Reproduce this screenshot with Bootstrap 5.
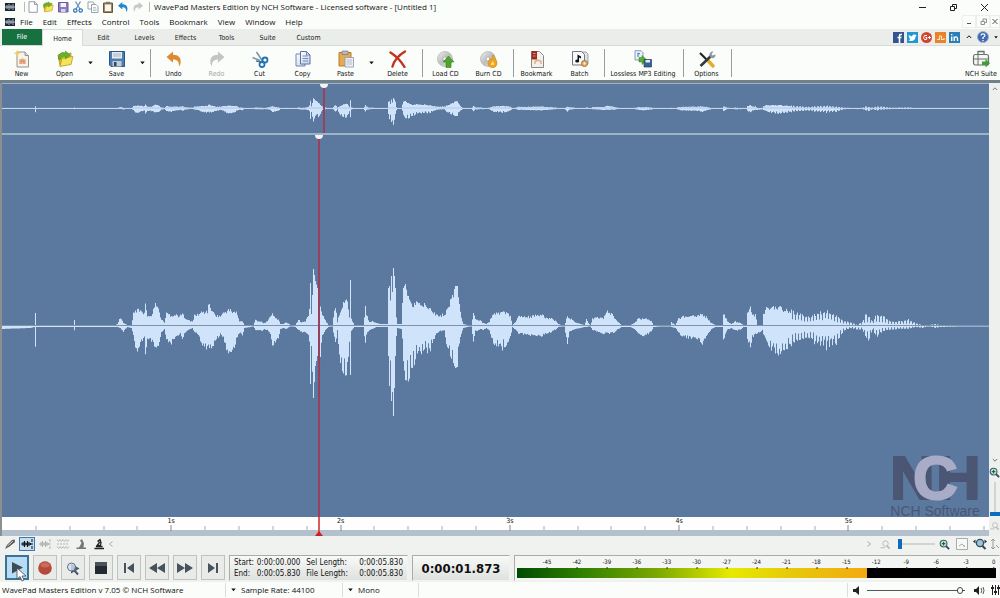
<!DOCTYPE html>
<html lang="en">
<head>
<meta charset="utf-8">
<meta name="viewport" content="width=device-width, initial-scale=1">
<title>WavePad Masters Edition</title>
<link href="https://cdn.jsdelivr.net/npm/bootstrap@5.3.0/dist/css/bootstrap.min.css" rel="stylesheet">
<style>
  :root { --ui: "Open Sans", "Noto Sans", sans-serif; --tahoma: "DejaVu Sans Condensed", "DejaVu Sans", sans-serif; }
  body { font: 8px/12px var(--ui); color: #111; background: #fbfdfb; overflow: hidden; }
  svg { display: block; flex: none; }
  a, a:hover { color: inherit; text-decoration: none; }
  .plain { border: 0; background: none; padding: 0; color: inherit; font: inherit; display: flex; align-items: center; justify-content: center; }
  .ic { width: 12px; height: 12px; }
  .rule { height: 10px; border-left: 1px solid #bbb; }
  .title-row { height: 14px; padding-left: 4px; }
  .title-row .plain { width: 15px; }
  .title-row .win { width: 31px; }
  .menu-row { height: 15px; padding-left: 4px; }
  .menus { gap: 10px; }
  .child .plain { width: 14px; height: 13px; border: 1px solid #eceeec; color: #555; }
  .tab-row { height: 17px; background: #ebedea; padding-left: 2px; font: 7px/15px var(--tahoma); border-bottom: 1px solid #d9dbd8; }
  .tab-row .tab { width: 41px; height: 16px; text-align: center; color: #222; padding: 0; line-height: 18px; }
  .tab-row .file-tab { background: #17703f; color: #fff; width: 40px; }
  .tab-row .tab.active { background: #fbfdfb; border: 1px solid #d9dbd8; border-bottom: 0; height: 17px; margin-bottom: -1px; }
  .social { gap: 3px; }
  .ribbon { height: 37px; border-bottom: 3px solid #71818c; font: 7px/9px var(--tahoma); }
  .tool { width: 43px; flex-direction: column; padding-top: 4px; justify-content: flex-start; white-space: nowrap; }
  .tool svg { width: 18px; height: 18px; margin-bottom: 2px; }
  .tool.wide { width: 74px; }
  .drop { width: 9px; }
  .sep { width: 1px; background: #9b9d9b; margin: 3px 1px 3px 3px; }
  .side { width: 11px; background: #edf0ed; color: #777; padding-top: 3px; }
  .wave-col { border-left: 2px solid #8b8f8f; min-width: 0; }
  .overview { height: 52px; background: #5b799e; border-bottom: 2px solid #9db3c6; border-top: 1px solid #9db3c6; }
  .mainwave { background: #5b799e; min-height: 0; }
  .fill { width: 100%; height: 100%; }
  .head { position: absolute; top: 0; bottom: 0; width: 2px; margin-left: -1px; background: #98405c; }
  .head::before { content: ""; position: absolute; left: -3px; top: 0; width: 8px; height: 4px; background: #f2f4f2; border-radius: 0 0 4px 4px; }
  .ruler { height: 19px; background: #fdfefd; border-bottom: 6px solid #b4c0ce; font: 7px/8px var(--tahoma); }
  .ruler i, .ruler span { position: absolute; transform: translateX(-50%); top: 0; }
  .ruler i { width: 1px; height: 4px; top: 9px; background: #aab; }
  .ruler i.sec { height: 6px; top: 8px; background: #889; }
  .ruler .pos { width: 2px; height: 19px; margin-left: -1px; background: #dc5a5c; transform: none; }
  .pos::after { content: ""; position: absolute; bottom: 0; left: -3px; border: 4px solid transparent; border-top: 0; border-bottom: 5px solid #d0201c; }
  .brand { position: absolute; right: 9px; bottom: -2px; width: 90px; color: #4a5674; font-family: "Liberation Sans", sans-serif; text-align: center; }
  .brand b { display: flex; font-size: 62px; line-height: 48px; height: 48px; -webkit-text-stroke: 2px currentColor; }
  .brand b span { width: 45px; flex: none; }
  .brand .c { margin: 0 -22px; color: #a8acc6; position: relative; z-index: 1; }
  .brand small { font-size: 14px; line-height: 16px; white-space: nowrap; display: block; margin-top: 1px; }
  .mode-row { height: 16px; background: #f0f2ef; padding: 0 0 0 2px; }
  .mode-row .plain { width: 18px; height: 14px; }
  .mode-row .on { background: #c3def2; border: 1px solid #3b78ad; width: 16px; margin: 0 1px; }
  .transport { background: #eff1ee; padding: 3px 0 2px 5px; height: 30px; }
  .key { width: 24px; height: 25px; border: 1px solid #bfc2bf; background: #e9ebe8; }
  .key.on { background: #b7dcf4; border: 2px solid #3c7395; }
  .pointer { position: absolute; left: 9px; top: 10px; }
  .panel { border: 1px solid; border-color: #a9aca9 #f2f2f2 #f2f2f2 #a9aca9; background: linear-gradient(#f8faf8, #dfe1df); height: 26px; }
  .times { width: 179px; padding: 1px 4px; font: 8px/11px var(--tahoma); }
  .times td { padding: 0; white-space: nowrap; }
  .clock { width: 98px; font: bold 13px/25px var(--tahoma); text-align: center; }
  .meter { padding: 1px 3px 0 2px; font: 6px/8px var(--tahoma); background: #f4f6f3; min-width: 0; }
  .scale { height: 11px; }
  .scale span { position: absolute; transform: translateX(-50%); top: 1px; }
  .scale span::after { content: ""; position: absolute; left: 50%; top: 9px; width: 1px; height: 2px; background: #333; }
  .level { height: 10px; background: #000; }
  .level div { height: 100%; background: linear-gradient(90deg, #004c00, #2f7f00 18%, #7ba800 40%, #e6ea00 61%, #e6c90a 78%, #f3aa10); }
  .status { height: 16px; background: #fbfdfb; padding-left: 2px; }
  .status .about { width: 223px; }
  .status .cell { border-left: 1px solid #dcdedc; padding-left: 5px; height: 14px; gap: 5px; }
  .rate { width: 117px; }
  .mode { width: 76px; }
  input[type=range] { appearance: none; height: 10px; background: linear-gradient(#555, #555) center/100% 1px no-repeat; margin: 0; }
  input[type=range]::-webkit-slider-thumb { appearance: none; width: 6px; height: 7px; border: 1px solid #444; border-radius: 3px; background: #fff; }
  .volume { width: 98px; }
  input.blue { width: 37px; background: linear-gradient(#d2d4d2, #d2d4d2) center/100% 2px no-repeat; }
  input.blue::-webkit-slider-thumb { width: 4px; height: 10px; border: 0; border-radius: 0; background: #0b6dc0; }
  input.vert { writing-mode: vertical-lr; direction: rtl; width: 10px; height: 34px; background: linear-gradient(#d2d4d2, #d2d4d2) center/2px 100% no-repeat; }
  input.vert::-webkit-slider-thumb { width: 10px; height: 4px; }
</style>
</head>
<body class="d-flex flex-column vh-100">

<svg width="0" height="0" class="position-absolute">
  <defs>
    <linearGradient id="gPage" x2="1" y2="1"><stop stop-color="#fff"/><stop offset="1" stop-color="#c3d0e4"/></linearGradient>
    <linearGradient id="gDisc" x2="1" y2="1"><stop stop-color="#eee"/><stop offset=".5" stop-color="#bcc0bc"/><stop offset="1" stop-color="#e9ebe8"/></linearGradient>
    <symbol id="app" viewBox="0 0 12 12"><path d="M1 2h10v8H1z" fill="#1d2630"/><path d="M1 6h10M3 4v4M5 3v6M7 4v4M9 3v6" stroke="#cfe0f0" stroke-width=".8"/></symbol>
    <symbol id="page" viewBox="0 0 12 12"><path d="M2 .7h5.500L10.300 3.500V11.300H2z" fill="#fff" stroke="#7c858f" stroke-width=".8"/><path d="M7.500.7v2.800h2.800" fill="none" stroke="#7c858f" stroke-width=".8"/></symbol>
    <symbol id="new" viewBox="0 0 18 18"><path d="M4 2h8l3.500 3.500V17H4z" fill="#f6f3ea" stroke="#96948c"/><path d="M12 2v3.500h3.500" fill="#ddd" stroke="#96948c"/><path d="M6 9h2l1.500-1L11 9h2v5H6z" fill="#eec19b"/><path d="M7 11.500l2.500-2 2.500 2M8 14v-2.500h3V14" fill="none" stroke="#d48e58"/><path d="M4 0l1 2.500L7.500 3 5 4.200 4 7 3 4.200.5 3 3 2.500z" fill="#f4cd4c"/></symbol>
    <symbol id="open" viewBox="0 0 18 18"><path d="M2 5l5-2 1.500 1.500L15 3v11L4 16z" fill="#e4b832" stroke="#b08d20" stroke-width=".7"/><path d="M4 16.500l2-8 11-2-2 8z" fill="#f5e45a" stroke="#b39522" stroke-width=".7"/><path d="M2.500 9c-.5-5 3-7.500 7-6V1l4.500 4-4.500 4V6.500C7 5.500 5 7 4 10z" fill="#62b52c" stroke="#3f8518" stroke-width=".5"/></symbol>
    <symbol id="save" viewBox="0 0 18 18"><path d="M1.500 1.500h15v15H3l-1.500-1.500z" fill="#4c80b5" stroke="#2d547f"/><path d="M4 2h10v6.500H4z" fill="#e8edf2"/><path d="M5 4h8M5 6h8" stroke="#a6b2be"/><path d="M4.500 11h9v5.500h-9z" fill="#c2ccd6"/><path d="M6 12h2.500v4H6z" fill="#34475c"/></symbol>
    <symbol id="save2" viewBox="0 0 12 12"><path d="M1.500 1.500h9.500v9.500h-9.500z" fill="#8b7ac0" stroke="#6a5a9b"/><path d="M3.500 2h5.500v4H3.500z" fill="#f1f1f8"/><path d="M4 8h4.500v3H4z" fill="#d6d3e8"/></symbol>
    <symbol id="cut" viewBox="0 0 18 18"><path d="M5.500 2l6 9M1.500 7.500L9 10.500" stroke="#7d99ae" stroke-width="1.700"/><path d="M5 11l6 1" stroke="#54758e" stroke-width="1.500"/><circle cx="14" cy="10" r="2.500" fill="none" stroke="#2674ad" stroke-width="1.800"/><circle cx="11" cy="14.500" r="2.500" fill="none" stroke="#2674ad" stroke-width="1.800"/></symbol>
    <symbol id="cut2" viewBox="0 0 12 12"><path d="M3.500.5l4.500 7.500M8.500.5L4 8" stroke="#6c93b8" stroke-width="1.300"/><circle cx="3.300" cy="9.500" r="1.700" fill="none" stroke="#2c75b8" stroke-width="1.200"/><circle cx="8.700" cy="9.500" r="1.700" fill="none" stroke="#2c75b8" stroke-width="1.200"/></symbol>
    <symbol id="copy" viewBox="0 0 18 18"><path d="M2 4h6l3 3v9H2z" fill="url(#gPage)" stroke="#6f86b5"/><path d="M6.500 1.500h6l3.500 3.500v9H6.500z" fill="url(#gPage)" stroke="#5873a9"/><path d="M12.500 1.500V5H16M8.500 6h5M8.500 8.500h5.500M8.500 11h5.500" fill="none" stroke="#5873a9" stroke-width=".8"/></symbol>
    <symbol id="copy2" viewBox="0 0 12 12"><path d="M1 1h5l1 1v6H1z" fill="#fff" stroke="#8a98a4" stroke-width=".9"/><path d="M4.500 3.500h4.500l2 2V11.500H4.500z" fill="#fff" stroke="#8a98a4" stroke-width=".9"/><path d="M6 6.500h3M6 8h3.500M6 9.500h3.500" stroke="#9cb0bf" stroke-width=".7"/></symbol>
    <symbol id="paste" viewBox="0 0 18 18"><path d="M2 2.500h12V16H2z" fill="#e6ab50" stroke="#b97c28"/><path d="M5 1h6v3.500H5z" fill="#b9babc" stroke="#77797c" stroke-width=".7"/><path d="M8 7.500h8.500V17H8z" fill="#eceef4" stroke="#8a94ae" stroke-width=".8"/><path d="M9.500 10h5.500M9.500 12h5.500M9.500 14h5.500" stroke="#a9b2c8" stroke-width=".8"/></symbol>
    <symbol id="clip" viewBox="0 0 12 12"><path d="M1.500 2h9v9.500h-9z" fill="#a98457" stroke="#6c5434"/><path d="M3 3.500h6V10H3z" fill="#f6f5f2"/><path d="M4 .8h4v2H4z" fill="#777"/></symbol>
    <symbol id="undo" viewBox="0 0 18 18"><path d="M1.500 7L8 1.500v3.200c5.500 0 8.500 3 7.500 9l-1.500 3c.2-5-1.500-7.200-6-7.200v3.300z" fill="currentColor"/></symbol>
    <symbol id="redo" viewBox="0 0 18 18"><path d="M16.500 7L10 1.500v3.200c-5.500 0-8.500 3-7.500 9l1.500 3c-.2-5 1.500-7.200 6-7.200v3.300z" fill="currentColor"/></symbol>
    <symbol id="del" viewBox="0 0 18 18"><path d="M1.500 2.500C7 6 12 11 15.500 17M16 1.500C10 5 5 11 3.500 16.500" stroke="#c2341f" stroke-width="2.400" fill="none" stroke-linecap="round"/></symbol>
    <symbol id="disc" viewBox="0 0 18 18"><circle cx="8" cy="9" r="7.500" fill="url(#gDisc)" stroke="#aeb2ae" stroke-width=".7"/><circle cx="8" cy="9" r="2" fill="#fff" stroke="#999" stroke-width=".6"/></symbol>
    <symbol id="load" viewBox="0 0 18 18"><use href="#disc"/><path d="M11.500 6l5.500 6h-3v5.500H9V12H6z" fill="#4da52c" stroke="#36801c" stroke-width=".6"/></symbol>
    <symbol id="burn" viewBox="0 0 18 18"><use href="#disc"/><path d="M13 5c1 3 4 4.500 4 8a4.500 4.500 0 0 1-9 .5c0-2 1.500-3 2-5l1.500 1.500C12.500 8.500 12 6.500 13 5z" fill="#f0a422" stroke="#c97c12" stroke-width=".6"/><path d="M12.500 11c1 1.500 2 2 1.500 4h-3c-.5-1.500 1-2 1.500-4z" fill="#fbe37a"/></symbol>
    <symbol id="bookmark" viewBox="0 0 18 18"><path d="M3.500 1.500h8l4 4v12h-12z" fill="#f2efec" stroke="#8c8985"/><path d="M3.500 1h5.500v8.500H3.500z" fill="#9c2c22"/><path d="M5 3.500h2.500M5 6h2.500" stroke="#d98a80"/><path d="M7 14v-2.500l3-1.500 3 1.500V14" stroke="#e2aa80" stroke-width="1.400" fill="none"/></symbol>
    <symbol id="batch" viewBox="0 0 18 18"><path d="M7 2h8l2 2v10H7z" fill="#dfe3ea" stroke="#8a8e98" stroke-width=".8"/><path d="M1.500 1.500h9l3 3V15h-12z" fill="#f7f8fa" stroke="#747882"/><path d="M6.500 11V4.500l3.500 2v2L8 7.500V11z" fill="#111"/><ellipse cx="6.200" cy="11" rx="2" ry="1.600" fill="#111"/><circle cx="13.500" cy="13.500" r="3" fill="#e6b062" stroke="#a8742c"/><circle cx="13.500" cy="13.500" r="1" fill="#fff"/></symbol>
    <symbol id="lossless" viewBox="0 0 18 18"><path d="M1 .7h6l2 2V10H1z" fill="#eaf1f8" stroke="#6f86a0" stroke-width=".8"/><path d="M4 7V3l2 1" stroke="#3b73a8" fill="none"/><path d="M5 7.500h3V5.500l5 4.500-5 4.500V12H5z" fill="#58ad34" stroke="#37821d" stroke-width=".5"/><path d="M10 9.500h7.500V17H10z" fill="#35648f" stroke="#24435f" stroke-width=".7"/><path d="M11.500 10h4.500v2.500h-4.500z" fill="#e4ecf3"/></symbol>
    <symbol id="options" viewBox="0 0 18 18"><path d="M2 3l8 8" stroke="#222" stroke-width="2.200"/><path d="M10 10.500l5 5.500" stroke="#e1ad2c" stroke-width="3.400" stroke-linecap="round"/><path d="M2.500 16L13 6" stroke="#333a40" stroke-width="2.600"/><path d="M12 7c-1.500-3 .5-6 3.500-5.500L13.500 4l1 1.500 3-1c.5 3-2.500 5-5.500 2.500z" fill="#8e959b"/></symbol>
    <symbol id="suite" viewBox="0 0 18 18"><path d="M6 4.500V1.500h6v3" fill="none" stroke="#69706c" stroke-width="1.300"/><rect x="1.500" y="4.500" width="15" height="10.500" rx="2" fill="#f5f7f5" stroke="#69706c" stroke-width="1.200"/><path d="M1.500 9h15M6 5v10" stroke="#69706c"/><path d="M10 11.500h3.500V9l4.500 4.300-4.500 4.300V15H10z" fill="#3f9e3a"/></symbol>
    <symbol id="caret" viewBox="0 0 6 4"><path d="M.3.300h5.400L3 3.500z" fill="#111"/></symbol>
    <symbol id="up" viewBox="0 0 6 6"><path d="M.8 4L3 1.800 5.200 4" fill="none" stroke="currentColor"/></symbol>
    <symbol id="zin" viewBox="0 0 12 12"><path d="M7.500 7.500l3.500 3.500" stroke="#345" stroke-width="2"/><circle cx="5" cy="5" r="3.700" fill="#cfe6ee" stroke="#3f5e70" stroke-width="1.200"/><path d="M3 5h4M5 3v4" stroke="#16701c" stroke-width="1.300"/></symbol>
    <symbol id="zout" viewBox="0 0 12 12"><g fill="none" stroke="#b6bab7"><path d="M7.500 7.500l3 3" stroke-width="1.600"/><circle cx="6" cy="5" r="3"/><path d="M.5 9.500h5"/></g></symbol>
    <symbol id="zall" viewBox="0 0 14 12"><path d="M9 7.500l3.500 3.500" stroke="#345" stroke-width="2"/><circle cx="7" cy="5" r="3.600" fill="#9cc6d8" stroke="#2e5063" stroke-width="1.300"/><path d="M0 3.500L2.500 1.500v4zM14 3.500L11.500 1.500v4z" fill="#234"/></symbol>
    <symbol id="wv" viewBox="0 0 14 12"><path d="M1 6h12M3 4v4M4.500 3v6M6 4.500v3M7.500 3v6M9 4v4M10.500 5v2" stroke="currentColor" stroke-width="1.100" fill="none"/><path d="M12 1v3M12 8v3" stroke="currentColor"/></symbol>
    <symbol id="wv2" viewBox="0 0 14 12"><path d="M1 1.500l1.500 2L4 1.500l1.500 2L7 1.500l1.500 2L10 1.500l1.500 2L13 1.500M1 8.500l1.500 2L4 8.500l1.500 2L7 8.500l1.500 2L10 8.500l1.500 2L13 8.500" stroke="currentColor" stroke-width=".9" fill="none"/><path d="M1 6h12" stroke="currentColor" stroke-dasharray="2 1"/></symbol>
    <symbol id="scrub" viewBox="0 0 12 12"><path d="M1.500 11h9.500v-1.500H8.500l.5-4-2-4.500-2 1.500L6.500 5 4 9.500H1.500z" fill="currentColor"/></symbol>
    <symbol id="scrub2" viewBox="0 0 12 12"><path d="M1.500 10.500h9.500M3 8.500h6.500M7.500 7.500L8 4.500 7 1.500 5 3l1.500 1.500L4 7.500z" stroke="currentColor" stroke-width="1.300" fill="none"/></symbol>
  </defs>
</svg>

<header>
  <div class="title-row d-flex align-items-center">
    <svg class="ic me-1"><use href="#app"/></svg>
    <span class="rule ms-1"></span>
    <button class="plain" aria-label="New file"><svg class="ic"><use href="#page"/></svg></button>
    <button class="plain" aria-label="Open file"><svg class="ic"><use href="#open"/></svg></button>
    <button class="plain" aria-label="Save file"><svg class="ic"><use href="#save2"/></svg></button>
    <button class="plain" aria-label="Cut"><svg class="ic"><use href="#cut2"/></svg></button>
    <button class="plain" aria-label="Copy"><svg class="ic"><use href="#copy2"/></svg></button>
    <button class="plain" aria-label="Paste"><svg class="ic"><use href="#clip"/></svg></button>
    <button class="plain" aria-label="Undo" style="color:#2687cf"><svg class="ic"><use href="#undo"/></svg></button>
    <button class="plain" aria-label="Redo" style="color:#c4c8c6"><svg class="ic"><use href="#redo"/></svg></button>
    <span class="rule ms-1 me-1"></span>
    <span class="text-nowrap">WavePad Masters Edition by NCH Software - Licensed software - [Untitled 1]</span>
    <div class="ms-auto d-flex">
      <button class="plain win" aria-label="Minimize"><svg width="9" height="9"><path d="M1 4.500h7" stroke="#222"/></svg></button>
      <button class="plain win" aria-label="Restore"><svg width="9" height="9"><path d="M1.500 3.500h4v4h-4zM3.500 3V1.500h4v4H6" fill="none" stroke="#222"/></svg></button>
      <button class="plain win" aria-label="Close"><svg width="9" height="9"><path d="M1 1l7 7M8 1L1 8" stroke="#222"/></svg></button>
    </div>
  </div>
  <nav class="menu-row d-flex align-items-center">
    <svg class="ic me-1"><use href="#app"/></svg>
    <div class="menus d-flex">
      <a href="#">File</a><a href="#">Edit</a><a href="#">Effects</a><a href="#">Control</a><a href="#">Tools</a><a href="#">Bookmark</a><a href="#">View</a><a href="#">Window</a><a href="#">Help</a>
    </div>
    <div class="child ms-auto d-flex">
      <button class="plain" aria-label="Minimize document"><svg width="7" height="7"><path d="M1 5.500h4" stroke="#555"/></svg></button>
      <button class="plain" aria-label="Restore document"><svg width="7" height="7"><path d="M1 3.500h3.500v3H1zM3 3V1h3.500v3.500H5" fill="none" stroke="#777" stroke-width=".8"/></svg></button>
      <button class="plain" aria-label="Close document" style="width:10px"><svg width="6" height="7"><path d="M.5 1l5 5M5.500 1l-5 5" stroke="#555"/></svg></button>
    </div>
  </nav>
  <div class="tab-row d-flex align-items-end">
    <button class="plain tab file-tab">File</button>
    <a href="#" class="tab active">Home</a><a href="#" class="tab">Edit</a><a href="#" class="tab">Levels</a><a href="#" class="tab">Effects</a><a href="#" class="tab">Tools</a><a href="#" class="tab">Suite</a><a href="#" class="tab">Custom</a>
    <div class="social ms-auto d-flex align-items-center align-self-center">
      <a href="#" aria-label="Facebook"><svg width="11" height="11"><path d="M0 0h11v11H0z" fill="#34548f"/><path d="M9 2.500H7.500Q6.500 2.500 6.500 4v7M4.500 5.500h4" stroke="#fff" stroke-width="1.600" fill="none"/></svg></a>
      <a href="#" aria-label="Twitter"><svg width="11" height="11"><path d="M0 0h11v11H0z" fill="#2297d6"/><path d="M1.500 3l3.500 1.500Q5.500 2 7.500 2.500L9.500 3 8.500 5Q8 9 4 9L1.500 8.500 3 7.500z" fill="#fff"/></svg></a>
      <a href="#" aria-label="Google Plus"><svg width="11" height="11"><circle cx="5.500" cy="5.500" r="5.500" fill="#cf4532"/><path d="M6 3.500Q3 2.500 2.500 5.500 3 8.500 5.500 7.500L6 5.500H4.500M8.500 4v3M7 5.500h3" stroke="#fff" fill="none"/></svg></a>
      <a href="#" aria-label="StumbleUpon"><svg width="11" height="11"><path d="M0 0h11v11H0z" fill="#e8832a"/><path d="M2 7.500h2.500v-3q1-1.500 2 0v3H9V6" stroke="#fbe0c4" fill="none" stroke-width="1.200"/></svg></a>
      <a href="#" aria-label="LinkedIn"><svg width="11" height="11"><path d="M0 0h11v11H0z" fill="#2a7fb6"/><path d="M2.700 4.500V9M5.200 9V4.500M5.200 6q2.800-2.500 3.300.5V9M2.700 2v1.300" stroke="#fff" stroke-width="1.400" fill="none"/></svg></a>
      <button class="plain" aria-label="Collapse ribbon" style="width:11px"><svg width="6" height="6"><use href="#up"/></svg></button>
      <button class="plain" aria-label="Help"><svg width="12" height="12"><circle cx="6" cy="6" r="5.500" fill="#3f68ae" stroke="#9db2d4"/><path d="M4 4.500Q4.200 2.800 6 2.800t2 1.700Q8 5.500 6 6.500V8M6 9v1.200" stroke="#fff" stroke-width="1.300" fill="none"/></svg></button>
      <button class="plain" aria-label="More help" style="width:8px"><svg width="4" height="3"><use href="#caret"/></svg></button>
    </div>
  </div>
  <div class="ribbon d-flex">
    <button class="plain tool"><svg><use href="#new"/></svg>New</button>
    <button class="plain tool"><svg><use href="#open"/></svg>Open</button>
    <button class="plain drop" aria-label="Open options"><svg width="5" height="4"><use href="#caret"/></svg></button>
    <button class="plain tool"><svg><use href="#save"/></svg>Save</button>
    <button class="plain drop" aria-label="Save options"><svg width="5" height="4"><use href="#caret"/></svg></button>
    <span class="sep"></span>
    <button class="plain tool"><svg style="color:#e08a30"><use href="#undo"/></svg>Undo</button>
    <button class="plain tool" style="color:#a5a8a5"><svg style="color:#c2c5c2"><use href="#redo"/></svg>Redo</button>
    <button class="plain tool"><svg><use href="#cut"/></svg>Cut</button>
    <button class="plain tool"><svg><use href="#copy"/></svg>Copy</button>
    <button class="plain tool"><svg><use href="#paste"/></svg>Paste</button>
    <button class="plain drop" aria-label="Paste options"><svg width="5" height="4"><use href="#caret"/></svg></button>
    <button class="plain tool"><svg><use href="#del"/></svg>Delete</button>
    <span class="sep"></span>
    <button class="plain tool"><svg><use href="#load"/></svg>Load CD</button>
    <button class="plain tool"><svg><use href="#burn"/></svg>Burn CD</button>
    <span class="sep"></span>
    <button class="plain tool"><svg><use href="#bookmark"/></svg>Bookmark</button>
    <button class="plain tool"><svg><use href="#batch"/></svg>Batch</button>
    <span class="sep"></span>
    <button class="plain tool wide"><svg><use href="#lossless"/></svg>Lossless MP3 Editing</button>
    <span class="sep"></span>
    <button class="plain tool"><svg><use href="#options"/></svg>Options</button>
    <span class="sep"></span>
    <button class="plain tool ms-auto" style="width:38px"><svg><use href="#suite"/></svg>NCH Suite</button>
  </div>
</header>

<main class="d-flex flex-grow-1" style="min-height:0">
  <section class="wave-col flex-grow-1 d-flex flex-column">
    <div class="overview position-relative">
      <svg class="fill" id="small" viewBox="0 -24.500 987 49" preserveAspectRatio="none"></svg>
      <div class="head" style="left:32.6%"></div>
    </div>
    <div class="mainwave flex-grow-1 position-relative">
      <svg class="fill" id="big" viewBox="0 -191 987 382" preserveAspectRatio="none"></svg>
      <div class="head" style="left:32.1%"></div>
      <div class="brand"><b><span>N</span><span class="c">C</span><span>H</span></b><small>NCH Software</small></div>
    </div>
    <div class="ruler position-relative" id="ruler"></div>
  </section>
  <aside class="side d-flex flex-column align-items-center">
    <svg width="6" height="6"><use href="#up"/></svg>
    <svg class="mt-auto" width="6" height="6" viewBox="0 0 6 6"><path d="M.8 2L3 4.200 5.200 2" fill="none" stroke="#777"/></svg>
    <button class="plain mt-1" aria-label="Vertical zoom in"><svg width="11" height="11"><use href="#zin"/></svg></button>
    <input type="range" class="blue vert my-1" aria-label="Vertical zoom" value="0">
    <button class="plain mb-1" aria-label="Vertical zoom out"><svg width="10" height="12"><use href="#zout"/></svg></button>
  </aside>
</main>

<footer>
  <div class="mode-row d-flex align-items-center">
    <button class="plain" aria-label="Pencil" style="width:16px"><svg class="ic" viewBox="0 0 12 12"><path d="M1 11l2-4 5-5 2.500-.500L11 4 5.500 8.500z" fill="#555"/><path d="M3.500 8L9 3" stroke="#ddd"/></svg></button>
    <button class="plain on" aria-label="Select"><svg width="14" height="12"><use href="#wv"/></svg></button>
    <button class="plain" aria-label="Select region" style="color:#b0b3b0"><svg width="14" height="12"><use href="#wv"/></svg></button>
    <button class="plain" aria-label="Channels" style="color:#b0b3b0"><svg width="14" height="12"><use href="#wv2"/></svg></button>
    <button class="plain" aria-label="Scrub" style="color:#777"><svg class="ic"><use href="#scrub"/></svg></button>
    <button class="plain" aria-label="Scrub line" style="color:#222"><svg class="ic"><use href="#scrub2"/></svg></button>
    <svg width="6" height="8"><path d="M4.500 1.500L1.500 4l3 2.500" fill="none" stroke="#aaa"/></svg>
    <div class="ms-auto d-flex align-items-center">
      <svg class="me-1" width="6" height="8"><path d="M1.500 1.500l3 2.500-3 2.500" fill="none" stroke="#aaa"/></svg>
      <button class="plain" aria-label="Zoom out"><svg width="11" height="11"><use href="#zout"/></svg></button>
      <input type="range" class="blue ms-1" aria-label="Zoom" value="0">
      <button class="plain" aria-label="Zoom in"><svg width="11" height="11"><use href="#zin"/></svg></button>
      <button class="plain" aria-label="Zoom to selection"><svg width="12" height="12"><path d="M.5.500h11v11H.5z" fill="#f7f8f7" stroke="#a9aca9"/><path d="M3 8l3-2 3 3M7 8h2" stroke="#aaa" fill="none"/></svg></button>
      <button class="plain" aria-label="Zoom to all"><svg width="14" height="12"><use href="#zall"/></svg></button>
      <button class="plain" aria-label="Fit vertically" style="width:11px"><svg width="10" height="12"><path d="M3 1v10M1 3l2-2 2 2M1 9l2 2 2-2M6 7l3 3" stroke="#999" fill="none"/></svg></button>
    </div>
  </div>
  <div class="transport d-flex gap-1">
    <button class="plain key on position-relative" aria-label="Play"><svg width="20" height="20"><path d="M5 4l11 5.500-11 6z" fill="#3a4a56"/></svg>
      <svg width="12" height="15" class="pointer"><path d="M1 1v11l3-2.500 2 4.500 2-1-2-4h4z" fill="#fff" stroke="#445" stroke-width=".8"/></svg></button>
    <button class="plain key" aria-label="Record"><svg width="16" height="16"><circle cx="8" cy="8" r="6.800" fill="#b54a3a"/><ellipse cx="8" cy="5" rx="4.500" ry="2.500" fill="#c96c5c"/></svg></button>
    <button class="plain key" aria-label="Scrub play"><svg width="16" height="16"><path d="M6 3.500l8.500 5L6 13.500z" fill="#48586c"/><path d="M9 10l4 4.500" stroke="#48586c" stroke-width="2"/><circle cx="6.500" cy="7" r="4" fill="#d5e3f0cc" stroke="#5f7388"/></svg></button>
    <button class="plain key" aria-label="Stop"><svg width="12" height="12"><path d="M0 0h12v12H0z" fill="#23292f"/><path d="M0 0h12v4H0z" fill="#4a535c"/></svg></button>
    <button class="plain key" aria-label="Go to start"><svg width="12" height="12"><path d="M1 1h2v10H1zM11 1v10L4 6z" fill="#48525c"/></svg></button>
    <button class="plain key" aria-label="Rewind"><svg width="16" height="12"><path d="M8 1v10L0 6zM16 1v10L8 6z" fill="#48525c"/></svg></button>
    <button class="plain key" aria-label="Fast forward"><svg width="16" height="12"><path d="M0 1v10l8-5zM8 1v10l8-5z" fill="#48525c"/></svg></button>
    <button class="plain key" aria-label="Go to end"><svg width="12" height="12"><path d="M9 1h2v10H9zM1 1v10l7-5z" fill="#48525c"/></svg></button>
    <div class="panel times flex-shrink-0">
      <table class="w-100"><tbody>
        <tr><td>Start:</td><td>0:00:00.000</td><td>Sel Length:</td><td class="text-end">0:00:05.830</td></tr>
        <tr><td>End:</td><td>0:00:05.830</td><td>File Length:</td><td class="text-end">0:00:05.830</td></tr>
      </tbody></table>
    </div>
    <div class="panel clock flex-shrink-0">0:00:01.873</div>
    <div class="panel meter flex-grow-1">
      <div class="scale position-relative" id="scale"></div>
      <div class="level"><div style="width:73%"></div></div>
    </div>
  </div>
  <div class="status d-flex align-items-center">
    <span class="about">WavePad Masters Edition v 7.05 © NCH Software</span>
    <button class="plain cell rate justify-content-start"><svg width="5" height="4"><use href="#caret"/></svg>Sample Rate: 44100</button>
    <button class="plain cell mode justify-content-start"><svg width="5" height="4"><use href="#caret"/></svg>Mono</button>
    <span class="cell"></span>
    <div class="cell ms-auto d-flex align-items-center">
      <svg width="9" height="9"><path d="M0 3h2.500L6 0v9L2.500 6H0z" fill="#222"/></svg>
      <input type="range" class="volume" aria-label="Volume" value="98">
      <svg class="ms-1" width="12" height="9"><path d="M0 3h2L5 0v9L2 6H0z" fill="#222"/><path d="M7 2q1.500 2.500 0 5M9 1q2 3.500 0 7" fill="none" stroke="#555"/></svg>
      <svg width="9" height="10"><path d="M1.500 0v10M4.500 0v10M7.500 0v10" stroke="#222"/><path d="M0 3h3M3 7h3M6 3h3" stroke="#222" stroke-width="2"/></svg>
    </div>
  </div>
</footer>

<script src="https://cdn.jsdelivr.net/npm/bootstrap@5.3.0/dist/js/bootstrap.bundle.min.js"></script>
<script>
  // Envelope of the recording: x, peak above the axis, peak below the axis.
  const env = `0 0 3,30 0 2,34 0 1,35 14 20,36 0 1,50 0 1,73 0 1,74 6 5,75 0 1,113 0 1,117 2 1,120 9 2,123 3 6,127 1 1,131 1 2,133 13 12,136 17 27,141 18 17,144 13 12,145 27 30,147 12 15,150 10 14,153 18 18,156 25 24,158 18 20,161 7 7,164 4 3,166 14 15,170 12 20,175 12 11,180 11 9,182 13 13,185 9 7,190 5 3,192 5 2,194 11 7,198 13 10,202 15 20,207 16 24,209 25 24,212 15 21,217 11 13,220 11 9,223 14 13,227 17 27,230 17 30,233 15 25,236 15 15,239 5 7,242 5 10,244 1 2,250 1 1,253 1 0,255 6 4,260 5 5,264 3 4,267 5 4,270 11 10,272 14 22,275 9 18,278 7 14,280 2 3,283 2 2,286 4 3,290 1 0,295 1 1,298 7 4,301 4 6,305 5 7,308 12 10,309 22 20,310 43 58,311 14 25,313 57 72,315 45 40,317 38 30,318 30 55,320 24 30,322 13 12,325 6 4,328 1 1,332 1 0,334 16 14,335 23 20,337 5 5,338 10 18,340 17 43,343 24 50,345 28 51,347 30 50,349 10 20,350 46 49,351 8 5,354 1 1,363 1 1,365 20 23,366 12 10,369 5 4,372 5 3,376 3 1,380 2 1,387 2 1,388 38 30,389 40 60,390 28 40,391 50 75,392 34 66,393 58 90,394 50 62,395 38 30,396 10 12,397 2 2,401 2 3,402 25 15,403 38 35,405 42 54,407 31 55,409 29 52,411 23 45,414 24 38,418 25 32,422 23 26,426 22 27,430 22 28,433 15 15,437 12 7,440 11 5,444 13 5,447 18 25,450 28 33,453 34 38,455 40 42,457 40 41,459 22 18,461 8 8,463 2 2,471 0 0,473 16 16,475 7 6,480 6 3,483 3 4,486 2 2,489 5 5,492 12 16,496 13 22,501 16 25,506 14 20,510 10 12,512 1 1,515 4 4,518 10 8,525 10 9,530 10 10,535 11 11,540 13 11,545 9 9,550 8 7,555 6 4,558 2 1,564 0 0,567 11 21,569 9 6,575 4 3,580 2 2,584 1 1,586 7 1,590 0 0,592 8 4,598 9 7,603 9 8,607 16 8,612 12 8,617 5 4,621 1 1,630 1 1,634 3 3,638 8 9,642 8 10,647 8 9,651 5 6,653 1 1,670 1 0,671 4 1,675 1 2,678 8 7,682 10 11,690 11 13,697 12 14,702 12 18,707 9 10,711 3 3,715 1 1,722 1 1,723 14 16,727 5 4,731 2 2,735 5 5,740 3 4,743 1 1,746 1 1,747 15 16,750 21 25,752 12 12,755 12 8,757 1 8,759 1 7,762 1 4,763 14 10,767 20 18,771 22 26,775 21 28,779 21 33,783 16 26,788 17 22,793 15 18,798 13 15,805 10 14,812 11 15,819 14 24,826 16 25,833 13 23,838 9 15,843 5 5,850 4 2,857 1 4,862 5 4,866 14 16,868 10 17,872 6 4,876 12 12,882 12 6,888 6 4,893 5 4,900 5 3,908 7 3,915 3 1,922 1 2,928 1 0,935 2 2,940 1 1,989 0 0`
    .split(",").map(p => p.split(" ").map(Number));

  function at(x) {
    let i = 1;
    while (i < env.length - 1 && env[i][0] < x) i++;
    const [x0, u0, d0] = env[i - 1], [x1, u1, d1] = env[i];
    const k = Math.min(1, Math.max(0, (x - x0) / (x1 - x0)));
    return [u0 + (u1 - u0) * k, d0 + (d1 - d0) * k];
  }
  // The voiced tail shows single periods of the wave.
  function comb(x) {
    if (x > 850) return x % 3 ? .95 : .4;
    if (x > 790) return x % 3 ? 1 : .5;
    return 1;
  }
  function noise(x) {
    return Math.abs(Math.sin(x * 12.9898) * 43758.5453) % 1;
  }
  function draw(id, scale, axis) {
    let d = "";
    for (let x = 2; x < 989; x++) {
      let [u, l] = at(x);
      const loud = u > 36 || l > 60;
      const ju = (u > 3 && !loud ? .76 + .28 * noise(x) : 1) * comb(x);
      const jl = (l > 3 && !loud ? .76 + .28 * noise(x + 500) : 1) * comb(x);
      const dip = l > 20 && !loud && x % 3 === 2 && x > 330 ? .7 : 1;
      u = Math.max(.4, u * ju * scale);
      l = Math.max(.6, l * jl * dip * scale);
      d += `M${x - 1.5} ${-u.toFixed(1)}V${l.toFixed(1)}`;
    }
    document.getElementById(id).innerHTML =
      `<path d="${d}" stroke="#cfe3fb" stroke-width="1.050"/><path d="M0 -.5H987" stroke="${axis}" stroke-width="1"/>`;
  }
  draw("big", 1, "#7e93ab");
  draw("small", .18, "#8fa6bf66");

  // Time ruler, one tick each fifth of a second over 5.83 seconds.
  let r = "";
  for (let i = 1; i < 30; i++) {
    const left = (i / 5 / 5.83 * 100).toFixed(2) + "%";
    const sec = i % 5 === 0;
    r += `<i class="${sec ? "sec" : ""}" style="left:${left}"></i>` + (sec ? `<span style="left:${left}">${i / 5}s</span>` : "");
  }
  document.getElementById("ruler").innerHTML = r + `<span class="pos" style="left:32.1%"></span>`;

  // Decibel scale from -48 to 0.
  let s = "";
  for (let v = -45; v <= 0; v += 3) s += `<span style="left:${v ? (v + 48) / 48 * 100 : 99.5}%">${v}</span>`;
  document.getElementById("scale").innerHTML = s;
</script>
</body>
</html>
